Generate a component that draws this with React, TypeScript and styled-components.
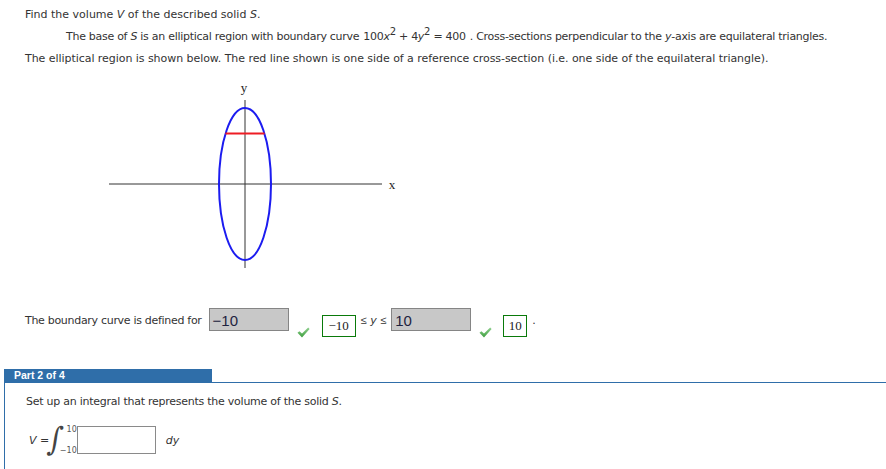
import React from "react";
import styled, { createGlobalStyle } from "styled-components";

const Global = createGlobalStyle`
  html, body { margin: 0; padding: 0; background: #fff; }
  body { font-family: "DejaVu Sans", Verdana, sans-serif; font-size: 11px; color: #333; }
`;

const Page = styled.div`
  display: flex;
  flex-direction: column;
  width: 886px;
  padding-top: 4px;
`;

const Line = styled.p<{ $indent?: number; $ls?: number }>`
  margin: 0;
  padding-left: ${(p) => p.$indent ?? 25}px;
  line-height: 22px;
  white-space: nowrap;
  letter-spacing: ${(p) => p.$ls ?? 0}px;
`;

const Math = styled.span`
  margin: 0 4px;
`;

const Sup = styled.sup`
  font-size: 10px;
  line-height: 0;
  vertical-align: 0.5em;
`;

const Graph = styled.svg`
  display: block;
  margin: 5px 0 0 100px;
`;

const AnswerRow = styled.div`
  display: flex;
  align-items: flex-start;
  margin-top: 38px;
  padding-left: 25px;
  height: 29px;
`;

const Label = styled.span<{ $ml?: number; $ls?: number }>`
  line-height: 23px;
  padding-top: 1px;
  margin-left: ${(p) => p.$ml ?? 0}px;
  letter-spacing: ${(p) => p.$ls ?? 0}px;
  white-space: nowrap;
`;

const Rel = styled.span`
  font-family: "Liberation Sans", Arial, sans-serif;
  font-size: 11px;
`;

const GrayBox = styled.div<{ $ml: number }>`
  box-sizing: border-box;
  width: 80px;
  height: 23px;
  margin-left: ${(p) => p.$ml}px;
  background: #c8c8c8;
  border: 1px solid #858585;
  padding: 2px 0 0 3px;
  font-family: "Liberation Sans", Arial, sans-serif;
  font-size: 15px;
  line-height: 19px;
  color: #1f2340;
`;

const Check = styled.svg<{ $ml: number }>`
  display: block;
  margin: 19px 0 0 ${(p) => p.$ml}px;
`;

const GreenBox = styled.div<{ $w: number; $ml: number }>`
  box-sizing: border-box;
  width: ${(p) => p.$w}px;
  height: 22px;
  margin: 7px 0 0 ${(p) => p.$ml}px;
  border: 1px solid #0a7a0a;
  font-family: "Liberation Serif", "Times New Roman", serif;
  font-size: 13px;
  line-height: 20px;
  text-align: center;
  color: #222;
`;

const Dot = styled.span`
  margin: 5px 0 0 5px;
  line-height: 16px;
`;

const PartTab = styled.div`
  box-sizing: border-box;
  margin: 32px 0 0 4px;
  width: 208px;
  height: 13px;
  background: #2f6ea9;
  color: #fff;
  font-family: "Liberation Sans", Arial, sans-serif;
  font-weight: bold;
  font-size: 10.5px;
  line-height: 13px;
  padding-left: 10px;
`;

const PartBox = styled.section`
  margin-left: 4px;
  border-top: 1px solid #2f6ea9;
  border-left: 1px solid #2f6ea9;
  height: 90px;
`;

const PartText = styled.p`
  margin: 8px 0 0;
  padding-left: 21px;
  line-height: 22px;
  letter-spacing: -0.25px;
`;

const IntegralRow = styled.div`
  display: flex;
  align-items: center;
  height: 34px;
  margin-top: 10px;
  padding-left: 24px;
`;

const Integral = styled.span`
  font-family: "DejaVu Serif", "Liberation Serif", serif;
  font-size: 28px;
  line-height: 34px;
  color: #444;
  margin-left: -1px;
  display: inline-block;
  transform: scaleY(1.15) skewX(-8deg);
`;

const Limits = styled.div`
  display: flex;
  flex-direction: column;
  justify-content: space-between;
  align-items: flex-end;
  height: 30px;
  margin-left: -3px;
  font-size: 8px;
  line-height: 9px;
  color: #555;
`;

const IntInput = styled.div`
  box-sizing: border-box;
  width: 79px;
  height: 28px;
  margin-left: 0;
  border: 1px solid #8a8a8a;
  background: #fff;
`;

const Dy = styled.span`
  margin-left: 10px;
  font-style: italic;
`;

const CheckMark = ({ ml }: { ml: number }) => (
  <Check $ml={ml} width="13" height="11" viewBox="0 0 13 11">
    <defs>
      <linearGradient id="cg" x1="0" y1="0" x2="0" y2="1">
        <stop offset="0" stopColor="#8fd08f" />
        <stop offset="1" stopColor="#3f9f3f" />
      </linearGradient>
    </defs>
    <path d="M0.5 5.8 L2.4 4.2 L5 6.6 L11.2 0.6 L12.6 2.1 L5 10.4 Z" fill="url(#cg)" />
  </Check>
);

export default function App() {
  return (
    <>
      <Global />
      <Page>
        <Line>
          Find the volume <i>V</i> of the described solid <i>S</i>.
        </Line>
        <Line $indent={66} $ls={-0.28}>
          The base of <i>S</i> is an elliptical region with boundary curve
          <Math>
            100<i>x</i>
            <Sup>2</Sup> + 4<i>y</i>
            <Sup>2</Sup> = 400
          </Math>
          . Cross-sections perpendicular to the <i>y</i>-axis are equilateral triangles.
        </Line>
        <Line $ls={-0.05}>
          The elliptical region is shown below. The red line shown is one side of a reference
          cross-section (i.e. one side of the equilateral triangle).
        </Line>
        <Graph width="300" height="195" viewBox="0 0 300 195">
          <line x1="9" y1="109" x2="282" y2="109" stroke="#333" strokeWidth="1" />
          <line x1="145" y1="25" x2="145" y2="193" stroke="#333" strokeWidth="1" />
          <ellipse cx="145" cy="109" rx="26" ry="76" fill="none" stroke="#1c1cf0" strokeWidth="2" />
          <line x1="125.4" y1="58.5" x2="164.6" y2="58.5" stroke="#ee1c24" strokeWidth="2" />
          <text x="144" y="17" fontFamily="Liberation Serif, serif" fontSize="13" fill="#222" textAnchor="middle">
            y
          </text>
          <text x="292" y="114" fontFamily="Liberation Serif, serif" fontSize="13" fill="#222" textAnchor="middle">
            x
          </text>
        </Graph>
        <AnswerRow>
          <Label $ls={-0.3}>The boundary curve is defined for</Label>
          <GrayBox $ml={7}>−10</GrayBox>
          <CheckMark ml={8} />
          <GreenBox $w={34} $ml={12}>−10</GreenBox>
          <Label $ml={5}>
            <Rel>≤</Rel> <i>y</i> <Rel>≤</Rel>
          </Label>
          <GrayBox $ml={5}>10</GrayBox>
          <CheckMark ml={8} />
          <GreenBox $w={24} $ml={11}>10</GreenBox>
          <Dot>.</Dot>
        </AnswerRow>
        <PartTab>Part 2 of 4</PartTab>
        <PartBox>
          <PartText>
            Set up an integral that represents the volume of the solid <i>S</i>.
          </PartText>
          <IntegralRow>
            <span>
              <i>V</i> =
            </span>
            <Integral>∫</Integral>
            <Limits>
              <span>10</span>
              <span>−10</span>
            </Limits>
            <IntInput />
            <Dy>dy</Dy>
          </IntegralRow>
        </PartBox>
      </Page>
    </>
  );
}
